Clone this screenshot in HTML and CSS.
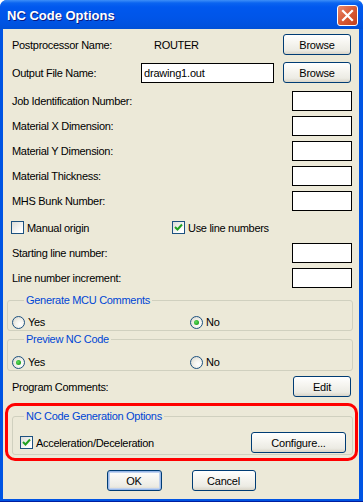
FILE: index.html
```html
<!DOCTYPE html>
<html lang="en">
<head>
    <meta charset="UTF-8">
    <title>NC Code Options</title>
    <link rel="stylesheet" href="styles.css">
</head>
<body>

    <div class="window">
        <div class="titlebar">
            <span class="title">NC Code Options</span>
            <span class="close">
                <svg width="13" height="13" viewBox="0 0 13 13"><path d="M2 2 L11 11 M11 2 L2 11" stroke="#fff" stroke-width="2.2" stroke-linecap="square"/></svg>
            </span>
        </div>

        <div class="client">
            <div class="row first">
                <span class="label wide">Postprocessor Name:</span>
                <span class="value">ROUTER</span>
                <button class="btn browse">Browse</button>
            </div>
            <div class="row output">
                <span class="label wide">Output File Name:</span>
                <input type="text" class="file-input" value="drawing1.out">
                <button class="btn browse">Browse</button>
            </div>

            <div class="row field top">
                <span class="label">Job Identification Number:</span>
                <input type="text" class="small-input">
            </div>
            <div class="row field">
                <span class="label">Material X Dimension:</span>
                <input type="text" class="small-input">
            </div>
            <div class="row field">
                <span class="label">Material Y Dimension:</span>
                <input type="text" class="small-input">
            </div>
            <div class="row field">
                <span class="label">Material Thickness:</span>
                <input type="text" class="small-input">
            </div>
            <div class="row field">
                <span class="label">MHS Bunk Number:</span>
                <input type="text" class="small-input">
            </div>

            <div class="row checks">
                <span class="option origin"><span class="checkbox"></span>Manual origin</span>
                <span class="option"><span class="checkbox checked"><svg width="11" height="11" viewBox="0 0 11 11"><path d="M2 5 L4.5 7.5 L9 2.5" fill="none" stroke="#21a121" stroke-width="2"/></svg></span>Use line numbers</span>
            </div>

            <div class="row field start">
                <span class="label">Starting line number:</span>
                <input type="text" class="small-input">
            </div>
            <div class="row field">
                <span class="label">Line number increment:</span>
                <input type="text" class="small-input">
            </div>

            <fieldset class="group mcu">
                <legend>Generate MCU Comments</legend>
                <div class="radios">
                    <span class="option yes"><span class="radio"></span>Yes</span>
                    <span class="option"><span class="radio checked"></span>No</span>
                </div>
            </fieldset>

            <fieldset class="group preview">
                <legend>Preview NC Code</legend>
                <div class="radios">
                    <span class="option yes"><span class="radio checked"></span>Yes</span>
                    <span class="option"><span class="radio"></span>No</span>
                </div>
            </fieldset>

            <div class="row comments">
                <span class="label">Program Comments:</span>
                <button class="btn edit">Edit</button>
            </div>

            <div class="highlight">
                <fieldset class="group gen">
                    <legend>NC Code Generation Options</legend>
                    <div class="gen-row">
                        <span class="option"><span class="checkbox checked"><svg width="11" height="11" viewBox="0 0 11 11"><path d="M2 5 L4.5 7.5 L9 2.5" fill="none" stroke="#21a121" stroke-width="2"/></svg></span>Acceleration/Deceleration</span>
                        <button class="btn configure">Configure...</button>
                    </div>
                </fieldset>
            </div>

            <div class="actions">
                <button class="btn ok">OK</button>
                <button class="btn cancel">Cancel</button>
            </div>
        </div>
    </div>

</body>
</html>
```

FILE: styles.css
```css
body {
    margin: 0;
    padding: 0;
    background-color: #fff;
    font-family: "Liberation Sans", Arial, sans-serif;
    font-size: 11px;
    letter-spacing: -0.3px;
    color: #000;
}
.window {
    width: 363px;
    height: 502px;
    display: flex;
    flex-direction: column;
    background-color: #0054e3;
    border-radius: 7px 7px 0 0;
    box-sizing: border-box;
    border-bottom: 1px solid #001ea0;
}
.titlebar {
    height: 29px;
    flex-shrink: 0;
    display: flex;
    align-items: center;
    justify-content: space-between;
    padding: 0 5px 0 7px;
    border-radius: 7px 7px 0 0;
    background: linear-gradient(#3d8ff8 0, #0a64f0 3px, #0058ee 7px, #0055e8 18px, #0052de 26px, #0050d6 29px);
}
.title {
    color: #fff;
    font-weight: bold;
    font-size: 13px;
    letter-spacing: 0;
    text-shadow: 1px 1px 0 #0a1a80;
    margin-top: 1px;
}
.close {
    width: 19px;
    height: 19px;
    margin-top: 1px;
    border: 1px solid #fff;
    border-radius: 3px;
    background: linear-gradient(135deg, #e9896c 0, #d85a36 50%, #c3401b 100%);
    display: flex;
    align-items: center;
    justify-content: center;
}
.client {
    flex: 1;
    margin: 0 4px 2px 3px;
    background-color: #ece9d8;
    padding-top: 5px;
}
.row {
    display: flex;
    align-items: center;
    padding: 0 7px 0 9px;
}
.label.wide {
    width: 129px;
    flex-shrink: 0;
}
.value {
    margin-left: 13px;
}
.btn {
    font-family: "Liberation Sans", Arial, sans-serif;
    font-size: 11px;
    letter-spacing: -0.2px;
    color: #000;
    height: 21px;
    border: 1px solid #003c74;
    border-radius: 3px;
    background: linear-gradient(#ffffff 0, #f6f5f0 40%, #ecebe4 80%, #d9d5c8 100%);
    padding: 0;
}
.browse {
    width: 68px;
    margin-left: auto;
    margin-right: 1px;
}
.first {
    height: 21px;
}
.output {
    height: 21px;
    margin-top: 7px;
}
.file-input {
    width: 133px;
    height: 20px;
    box-sizing: border-box;
    border: 1px solid #000;
    font-family: "Liberation Sans", Arial, sans-serif;
    font-size: 11px;
    letter-spacing: -0.2px;
    padding: 0 2px;
    margin: 0;
}
.small-input {
    width: 60px;
    height: 20px;
    box-sizing: border-box;
    border: 1px solid #000;
    margin: 0 0 0 auto;
    padding: 0;
}
.field {
    height: 20px;
    margin-top: 5px;
}
.field.top {
    margin-top: 8px;
}
.checks {
    height: 13px;
    margin-top: 10px;
    padding-left: 8px;
}
.option {
    display: flex;
    align-items: center;
}
.origin {
    width: 161px;
}
.checkbox {
    width: 11px;
    height: 11px;
    border: 1px solid #1c5180;
    background: linear-gradient(135deg, #dcdcd7 0, #fff 80%);
    margin-right: 3px;
    display: flex;
    align-items: center;
    justify-content: center;
}
.field.start {
    margin-top: 9px;
}
.group {
    margin: 5px 6px 0 4px;
    padding: 0 0 2px 4px;
    border: 1px solid #d0d0bf;
    border-radius: 3px;
}
.group legend {
    color: #0046d5;
    line-height: 14px;
    padding: 0 2px;
    margin-left: 12px;
}
.preview {
    margin-top: 1px;
}
.radios {
    display: flex;
    height: 12px;
    margin-top: 9px;
}
.preview .radios {
    margin-top: 10px;
}
.yes {
    width: 178px;
}
.radio {
    width: 11px;
    height: 11px;
    border: 1px solid #1c5180;
    border-radius: 50%;
    background: radial-gradient(circle at 65% 65%, #fff 0, #f3f2ec 40%, #d5d3c8 100%);
    margin-right: 3px;
    position: relative;
}
.radio.checked::after {
    content: "";
    position: absolute;
    left: 3px;
    top: 3px;
    width: 5px;
    height: 5px;
    border-radius: 50%;
    background: radial-gradient(circle at 40% 40%, #5ee05e 0, #21a121 70%);
}
.comments {
    height: 21px;
    margin-top: 5px;
}
.edit {
    width: 58px;
    margin-left: auto;
    margin-right: 1px;
}
.highlight {
    margin: 6px 1px 0 2px;
    border: 3px solid #ff0000;
    border-radius: 10px;
    padding: 3px 0 3px 0;
}
.group.gen {
    margin: 0 2px 0 4px;
    padding: 0 6px 1px 7px;
}
.group.gen legend {
    margin-left: 4px;
}
.gen-row {
    display: flex;
    align-items: center;
    justify-content: space-between;
    margin-top: 9px;
}
.configure {
    width: 95px;
}
.actions {
    display: flex;
    justify-content: center;
    gap: 30px;
    margin-top: 9px;
}
.ok {
    width: 55px;
    box-shadow: inset 0 0 0 1px #98b8ea, inset 0 0 0 2px #c1d2ee;
}
.cancel {
    width: 64px;
}
```
